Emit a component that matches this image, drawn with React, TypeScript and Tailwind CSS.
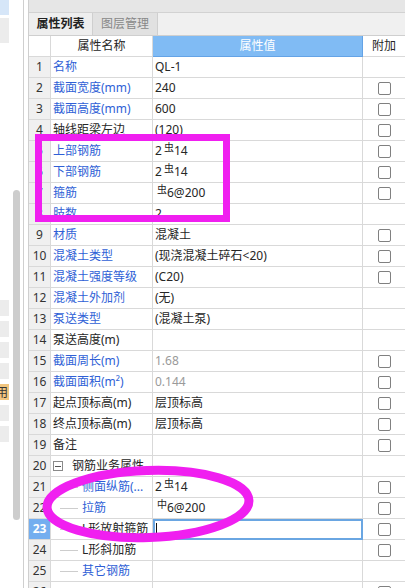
import React from 'react';

type Row = {
  n: number;
  name?: string;
  blue?: boolean;
  value?: React.ReactNode;
  gray?: boolean;
  cb?: boolean;
  indent?: boolean;
  group?: boolean;
  editing?: boolean;
};

const Sym = ({ c }: { c: string }) => (
  <span className="relative -top-[4px] ml-[2px] font-['Noto_Sans_CJK_SC',sans-serif] text-[10px]">
    {c}
  </span>
);

const rows: Row[] = [
  { n: 1, name: '名称', blue: true, value: 'QL-1' },
  { n: 2, name: '截面宽度(mm)', blue: true, value: '240', cb: true },
  { n: 3, name: '截面高度(mm)', blue: true, value: '600', cb: true },
  { n: 4, name: '轴线距梁左边', value: '(120)', cb: true },
  { n: 5, name: '上部钢筋', blue: true, value: <>2<Sym c="虫" />14</>, cb: true },
  { n: 6, name: '下部钢筋', blue: true, value: <>2<Sym c="虫" />14</>, cb: true },
  { n: 7, name: '箍筋', blue: true, value: <><Sym c="虫" />6@200</>, cb: true },
  { n: 8, name: '肢数', blue: true, value: '2' },
  { n: 9, name: '材质', blue: true, value: '混凝土', cb: true },
  { n: 10, name: '混凝土类型', blue: true, value: '(现浇混凝土碎石<20)', cb: true },
  { n: 11, name: '混凝土强度等级', blue: true, value: '(C20)', cb: true },
  { n: 12, name: '混凝土外加剂', blue: true, value: '(无)' },
  { n: 13, name: '泵送类型', blue: true, value: '(混凝土泵)' },
  { n: 14, name: '泵送高度(m)' },
  { n: 15, name: '截面周长(m)', blue: true, value: '1.68', gray: true, cb: true },
  { n: 16, name: '截面面积(m²)', blue: true, value: '0.144', gray: true, cb: true },
  { n: 17, name: '起点顶标高(m)', value: '层顶标高', cb: true },
  { n: 18, name: '终点顶标高(m)', value: '层顶标高', cb: true },
  { n: 19, name: '备注', cb: true },
  { n: 20, name: '钢筋业务属性', group: true },
  { n: 21, name: '侧面纵筋(...', blue: true, indent: true, value: <>2<Sym c="虫" />14</>, cb: true },
  { n: 22, name: '拉筋', blue: true, indent: true, value: <><Sym c="中" />6@200</>, cb: true },
  { n: 23, name: 'L形放射箍筋', indent: true, editing: true, cb: true },
  { n: 24, name: 'L形斜加筋', indent: true, cb: true },
  { n: 25, name: '其它钢筋', blue: true, indent: true },
  { n: 26, name: '', cb: true },
];

const Checkbox = () => (
  <span className="block h-[13px] w-[13px] rounded-[2px] border border-[#808080] bg-white" />
);

function TableRow({ r }: { r: Row }) {
  const sel = r.editing;
  return (
    <>
      <div
        className={`flex h-[21px] items-center justify-center border-r border-b border-[#d9d9d9] text-[12px] ${
          sel ? 'bg-[#74aeef] font-bold text-white' : 'bg-[#f0f0f0] text-[#333]'
        }`}
      >
        {r.n}
      </div>
      <div
        className={`flex h-[21px] items-center whitespace-nowrap border-r border-b border-[#d9d9d9] text-[12px] ${
          r.blue ? 'text-[#2f5fd6]' : 'text-[#262626]'
        }`}
      >
        {r.group ? (
          <>
            <span className="ml-[2px] flex h-[10px] w-[10px] items-center justify-center border border-[#8a8a8a] bg-white">
              <span className="h-px w-[6px] bg-[#555]" />
            </span>
            <span className="ml-[9px]">{r.name}</span>
          </>
        ) : r.indent ? (
          <>
            <span className="ml-[9px] h-px w-[18px] shrink-0 bg-[#cdcdcd]" />
            <span className="ml-[4px]">{r.name}</span>
          </>
        ) : (
          <span className="pl-[2px]">{r.name}</span>
        )}
      </div>
      {sel ? (
        <div className="flex h-[21px] items-center border-2 border-[#6aa6e2] bg-white">
          <span className="ml-[1px] h-[13px] w-px bg-[#111]" />
        </div>
      ) : (
        <div
          className={`flex h-[21px] items-center whitespace-nowrap border-r border-b border-[#d9d9d9] pl-[2px] text-[12px] ${
            r.gray ? 'text-[#9a9a9a]' : 'text-[#262626]'
          }`}
        >
          <span>{r.value}</span>
        </div>
      )}
      <div className="flex h-[21px] items-center justify-center border-b border-[#d9d9d9]">
        {r.cb ? <Checkbox /> : null}
      </div>
    </>
  );
}

export default function App() {
  return (
    <div className="relative flex h-[588px] w-[405px] overflow-hidden bg-white font-['Noto_Sans','Noto_Sans_CJK_SC',sans-serif]">
      {/* left sidebar */}
      <div className="flex w-[24px] shrink-0 border-r border-[#cfcfcf]">
        <div className="flex w-[9px] flex-col">
          <div className="h-[15px] bg-[#d6e6f8]" />
          <div className="mt-[3px] h-[25px] bg-[#ececec]" />
          <div className="mt-[257px] h-[16px] bg-[#ececec]" />
          <div className="mt-[5px] h-[16px] bg-[#ececec]" />
          <div className="mt-[5px] h-[16px] bg-[#ececec]" />
          <div className="mt-[5px] h-[16px] bg-[#ececec]" />
          <div className="mt-[5px] flex h-[16px] items-center justify-end overflow-hidden bg-[#f1c57f] pr-[1px] text-[12px] leading-none text-[#333]">
            <span className="shrink-0 font-['Noto_Sans_CJK_SC',sans-serif]">用</span>
          </div>
          <div className="mt-[5px] h-[16px] bg-[#ececec]" />
          <div className="mt-[5px] h-[16px] bg-[#ececec]" />
        </div>
        <div className="w-[14px]">
          <div className="ml-[4px] mt-[190px] h-[330px] w-[7px] rounded-full bg-[#cdcdcd]" />
        </div>
      </div>

      {/* main panel */}
      <div className="ml-[4px] flex min-w-0 flex-1 flex-col border-l border-[#cfcfcf]">
        <div className="h-[13px] shrink-0 border-b border-[#d2d2d2] bg-[#e6e6e6]" />
        <div className="flex h-[23px] shrink-0 border-b border-[#cfcfcf] bg-[#f0f0f0] text-[12px]">
          <div className="flex w-[64px] items-center justify-center border-r border-[#cfcfcf] bg-[#eeeeee] font-bold text-[#222]">
            属性列表
          </div>
          <div className="flex w-[65px] items-center justify-center border-r border-[#cfcfcf] bg-[#e1e1e1] text-[#888]">
            图层管理
          </div>
        </div>

        <div className="grid grid-cols-[22px_102px_210px_42px]">
          <div className="h-[21px] border-r border-b border-[#d9d9d9] bg-white" />
          <div className="flex h-[21px] items-center justify-center border-r border-b border-[#d9d9d9] text-[12px] text-[#262626]">
            属性名称
          </div>
          <div className="flex h-[21px] items-center justify-center border-r border-b border-[#64a3e6] bg-[#80bbf4] text-[12px] text-white">
            属性值
          </div>
          <div className="flex h-[21px] items-center justify-center border-b border-[#d9d9d9] text-[12px] text-[#262626]">
            附加
          </div>
          {rows.map((r) => (
            <TableRow key={r.n} r={r} />
          ))}
        </div>
      </div>

      {/* annotations */}
      <svg
        className="pointer-events-none absolute left-0 top-0"
        width="405"
        height="588"
        viewBox="0 0 405 588"
      >
        <rect x="38.5" y="137.5" width="188" height="81" fill="none" stroke="#f01ff0" strokeWidth="7" />
        <ellipse
          cx="148"
          cy="504"
          rx="101"
          ry="33.5"
          fill="none"
          stroke="#f01ff0"
          strokeWidth="9"
          transform="rotate(-2 148 504)"
        />
      </svg>
    </div>
  );
}
